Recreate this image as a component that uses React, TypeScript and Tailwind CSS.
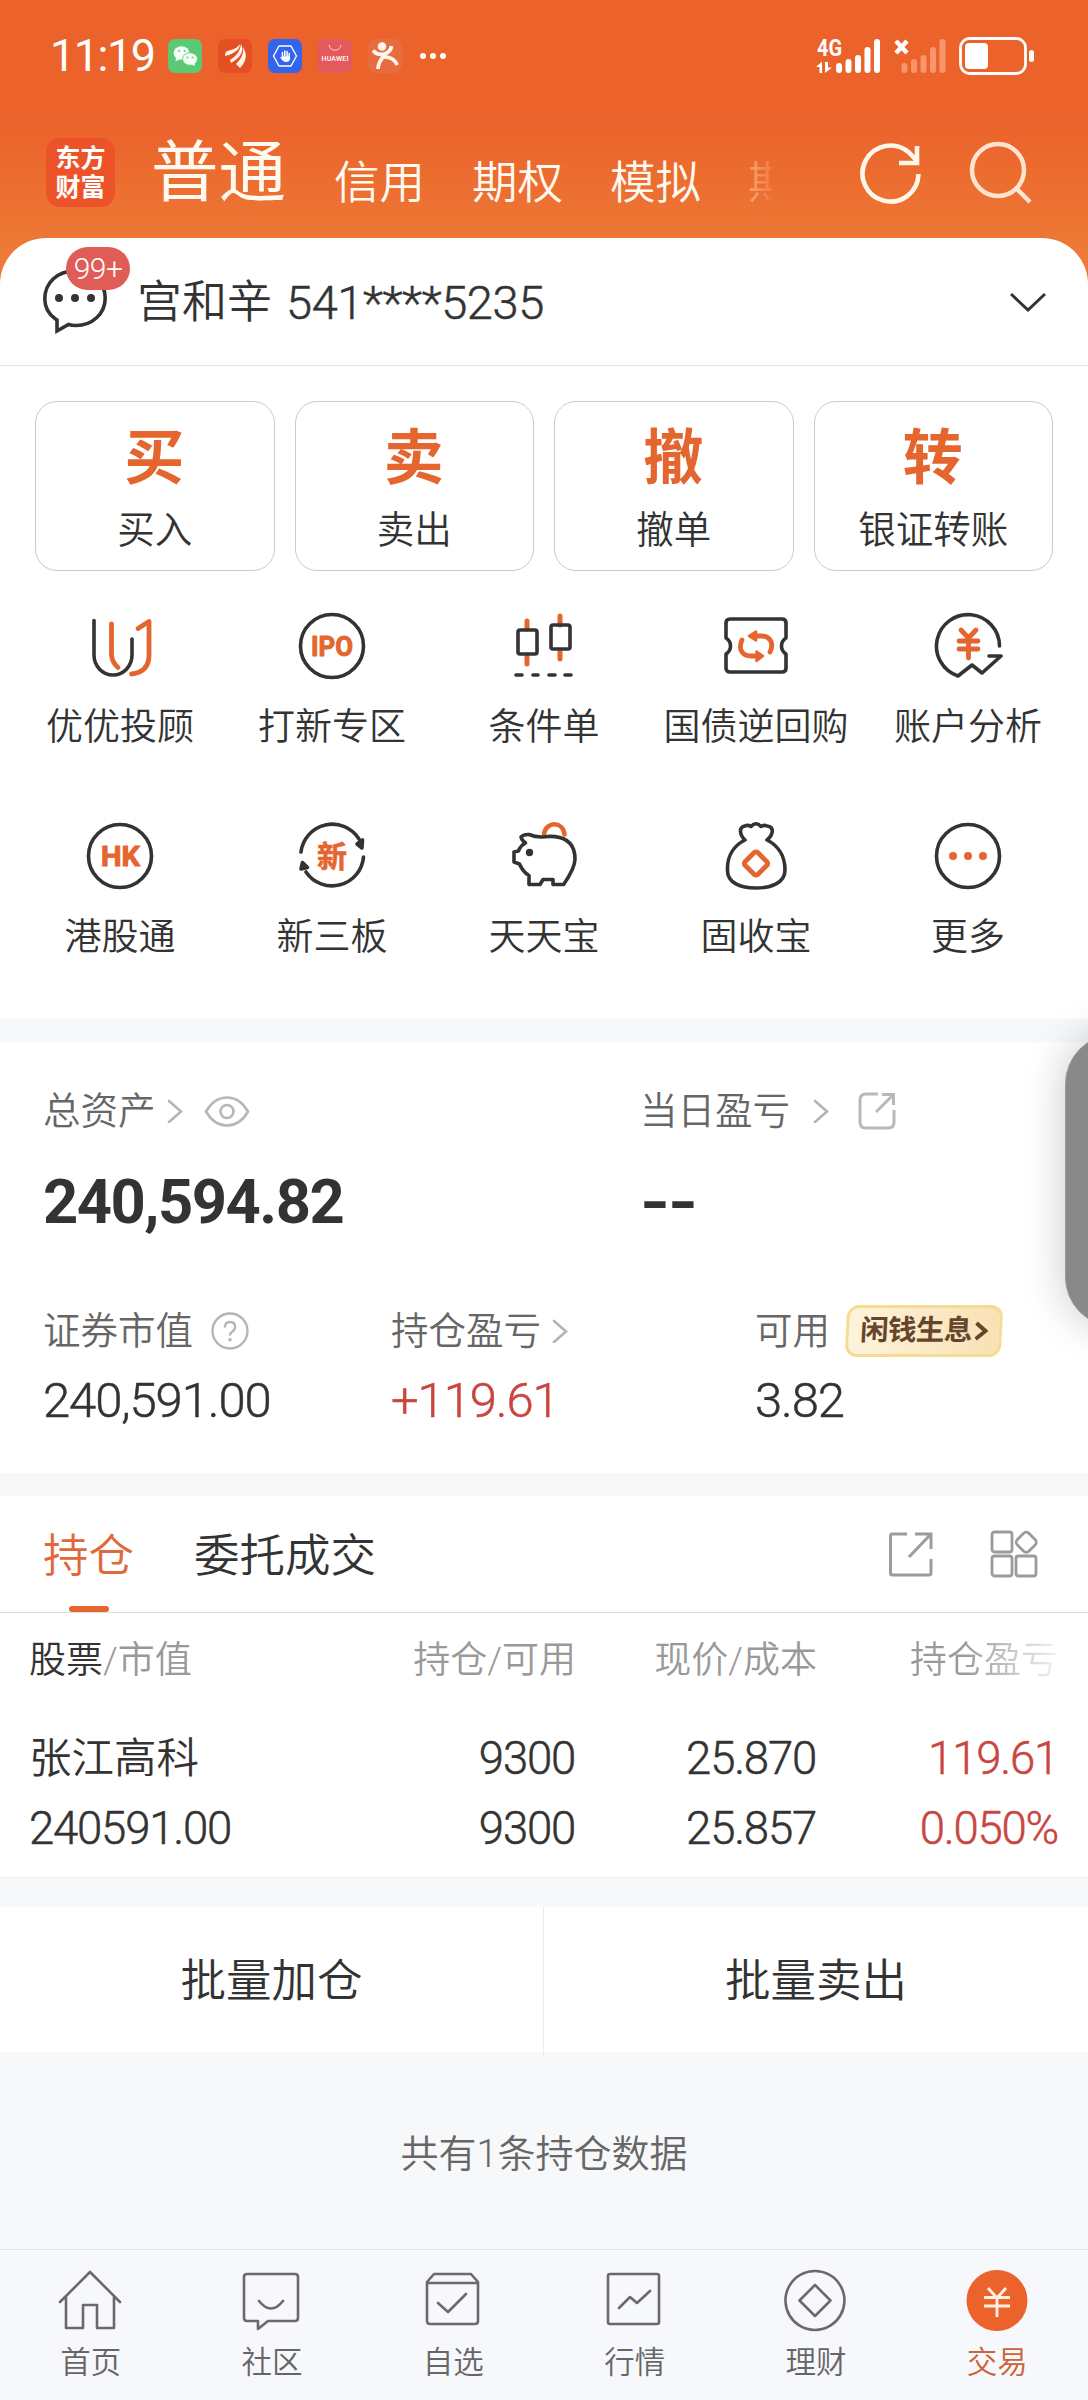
import type { ReactNode } from "react";

const INK = "#333333";
const ORANGE = "#e5652f";

function StatusBar() {
  return (
    <div className="flex h-[112px] items-center pl-[50px] pr-[54px] text-white">
      <span className="w-[118px] text-[45px] font-normal leading-[48px] tracking-[-1.5px]">11:19</span>
      <div className="flex gap-4">
        <svg className="size-[34px]" viewBox="0 0 34 34">
          <rect width="34" height="34" rx="7" fill="#5bc873" />
          <ellipse cx="13.500" cy="14" rx="8" ry="6.800" fill="#f3fff5" />
          <path d="M8 18 L7.500 22.500 L12 20 Z" fill="#f3fff5" />
          <ellipse cx="22" cy="20" rx="7.500" ry="6.300" fill="#f3fff5" stroke="#5bc873" strokeWidth="0.900" />
          <path d="M23 25 L27 27 L26.500 23 Z" fill="#f3fff5" />
          <circle cx="11" cy="12" r="1" fill="#5bc873" />
          <circle cx="16.500" cy="12" r="1" fill="#5bc873" />
          <circle cx="19.500" cy="18.500" r="0.900" fill="#5bc873" />
          <circle cx="24.500" cy="18.500" r="0.900" fill="#5bc873" />
        </svg>
        <svg className="size-[34px]" viewBox="0 0 34 34">
          <rect width="34" height="34" rx="7" fill="#e44f24" />
          <path d="M7 17 C7 12 9 12 13 11 C17 10 20 8 22 5 C22 11 15 15 7 17 Z" fill="#fff3ea" />
          <path d="M12 21 C18 17 22 13 23 5 C27 12 22 19 13 24 Z" fill="#fff3ea" />
          <path d="M18 25 C23 20 26 15 25 8 C30 16 28 23 22 29 Z" fill="#fff3ea" />
        </svg>
        <svg className="size-[34px]" viewBox="0 0 34 34">
          <rect width="34" height="34" rx="7" fill="#3265ec" />
          <path d="M11 7 H23 L28.500 17 L23 27 H11 L5.500 17 Z" fill="none" stroke="#fff" strokeWidth="1.400" strokeLinejoin="round" />
          <path d="M14.500 13.500 V19 M16.800 12 V19 M19.100 12.500 V19 M21.200 14.500 V20" stroke="#fff" strokeWidth="1.500" strokeLinecap="round" />
          <path d="M13.800 17.500 H22 V20 Q21.500 23 18 23 Q15.500 23 12 18.500 L13 18 L14 19 Z" fill="#fff" />
        </svg>
        <svg className="size-[34px]" viewBox="0 0 34 34">
          <rect width="34" height="34" rx="7" fill="#e4595b" />
          <path d="M11 6 C12 13 22 13 23 6" fill="none" stroke="#fbd3cf" strokeWidth="1" />
          <text x="17" y="21.800" textAnchor="middle" textLength="27" fontSize="7" fontWeight="500" fill="#fff">HUAWEI</text>
        </svg>
        <svg className="size-[34px]" viewBox="0 0 34 34">
          <rect width="34" height="34" rx="7" fill="#e76d40" />
          <circle cx="14" cy="7.500" r="4.300" fill="#fff6ee" />
          <path d="M5 11.500 C8 15 12 16 16 15 C20 14 23 11 23.500 7 M17 16 C13 20 10 24 10 30 M13 18 C21 17 27 20 29 26" fill="none" stroke="#fff6ee" strokeWidth="3.800" />
        </svg>
      </div>
      <div className="ml-[18px] flex gap-1">
        <i className="size-[6px] rounded-full bg-white" />
        <i className="size-[6px] rounded-full bg-white" />
        <i className="size-[6px] rounded-full bg-white" />
      </div>
      <svg className="ml-auto h-[38px] w-[218px] overflow-visible" viewBox="816 37 218 38" fill="#fff">
        <text x="817" y="56" fontSize="23" fontWeight="700" textLength="25" lengthAdjust="spacingAndGlyphs">4G</text>
        <path d="M816 67 L822 61.500 V73 H819.500 V67 Z M825 62 V73 L832 67.500 H828 V62 Z" />
        <rect x="836" y="63" width="6" height="10" rx="3" />
        <rect x="845.500" y="59" width="6" height="14" rx="3" />
        <rect x="855" y="55" width="6" height="18" rx="3" />
        <rect x="864.500" y="47" width="6" height="26" rx="3" />
        <rect x="874" y="39" width="6" height="34" rx="3" />
        <path d="M896 41 L907 53 M907 41 L896 53" stroke="#fff" strokeWidth="4.500" />
        <g fill="#f9946b">
          <rect x="901.500" y="63" width="6" height="10" rx="3" />
          <rect x="911" y="59" width="6" height="14" rx="3" />
          <rect x="920.500" y="55" width="6" height="18" rx="3" />
          <rect x="930" y="47" width="6" height="26" rx="3" />
          <rect x="939.500" y="39" width="6" height="34" rx="3" />
        </g>
        <rect x="960.500" y="38.500" width="65" height="35" rx="9" fill="none" stroke="#fff" strokeWidth="2.800" />
        <rect x="965" y="43" width="23" height="26" rx="4" />
        <rect x="1029" y="50" width="5" height="12" rx="2.500" />
      </svg>
    </div>
  );
}

function TopTabs() {
  return (
    <div className="flex h-[126px] pl-[46px] pt-[26px] text-[#fffaf0]">
      <div className="flex size-[69px] flex-col items-center justify-center rounded-[14px] bg-[#ed5329] text-[25px] font-bold leading-[29px] text-white">
        <span>东方</span>
        <span>财富</span>
      </div>
      <span className="ml-[36px] text-[67.500px] font-normal leading-[70px]">普通</span>
      <div className="flex gap-[47px] pl-[48px] pt-[20px] text-[45.500px] leading-[52px]">
        <span>信用</span>
        <span>期权</span>
        <span>模拟</span>
        <span className="bg-linear-to-r from-[#f8a473] from-0% via-[#ef7c45] via-52% to-transparent to-54% bg-clip-text text-transparent">期</span>
      </div>
      <svg className="ml-auto mr-[56px] h-[68px] w-[172px]" viewBox="860 138 172 68" fill="none" strokeWidth="4.500">
        <path d="M918.500 174 A28 28 0 1 1 909 152.500 L917 161" stroke="#fff8ea" strokeWidth="4.600" />
        <path d="M917 146 V163 H899" stroke="#fff8ea" strokeWidth="4.600" />
        <circle cx="998" cy="170" r="26" stroke="#ffe5d0" />
        <path d="M1017 189 L1030 202" stroke="#ffe5d0" />
      </svg>
    </div>
  );
}

function AccountRow() {
  return (
    <div className="flex h-[128px] items-center border-b border-[#e2e4e6] pl-[43px] pr-[42px]">
      <div className="relative mr-[30px] h-[66px] w-[64px]">
        <svg className="size-full" viewBox="0 0 64 66" fill="none">
          <path d="M12.500 50 C4 44 1.800 36 1.800 30 C1.800 14 14 2 32 2 C50 2 62.200 14 62.200 29 C62.200 45 49 56.500 33 56.500 C30 56.500 27 56 25.500 55.500 L14 62 L14 51 Z" stroke={INK} strokeWidth="3.600" />
          <circle cx="16" cy="29" r="4" fill={INK} />
          <circle cx="32" cy="29" r="4" fill={INK} />
          <circle cx="48" cy="29" r="4" fill={INK} />
        </svg>
        <span className="absolute -top-[22px] left-[23px] flex h-[43px] w-[64px] items-center justify-center rounded-full bg-[#e05c57] text-[30px] tracking-[-0.5px] text-white">99+</span>
      </div>
      <span className="mt-[3px] text-[45px] leading-[60px]">宫和辛</span>
      <span className="ml-[14px] mt-[2px] text-[47px] leading-[60px] tracking-[-0.400px] [-webkit-text-stroke:0.500px]">541****5235</span>
      <svg className="ml-auto h-[20px] w-[36px]" viewBox="0 0 36 20" fill="none">
        <path d="M1 2 L18 18 L35 2" stroke={INK} strokeWidth="3" />
      </svg>
    </div>
  );
}

const trades = [
  { big: "买", label: "买入" },
  { big: "卖", label: "卖出" },
  { big: "撤", label: "撤单" },
  { big: "转", label: "银证转账" },
];

function TradeCards() {
  return (
    <div className="grid grid-cols-4 gap-5 px-[35px] pt-[35px]">
      {trades.map((t) => (
        <div key={t.big} className="flex h-[170px] flex-col items-center rounded-[22px] border border-[#cbcbcb] pt-[25px]">
          <span className="-ml-px text-[60px] font-bold leading-[64px] text-[#e5652f]">{t.big}</span>
          <span className="mt-[13px] text-[37.5px] leading-[52px]">{t.label}</span>
        </div>
      ))}
    </div>
  );
}

function Icon({ children }: { children: ReactNode }) {
  return (
    <svg className="size-[70px]" viewBox="0 0 70 70" fill="none" stroke={INK} strokeWidth="3.600" strokeLinecap="round" strokeLinejoin="round">
      {children}
    </svg>
  );
}

const shortcuts = [
  {
    label: "优优投顾",
    icon: (
      <Icon>
        <path d="M9 9.500 V44 A19 20 0 0 0 47 44 V28" />
        <path d="M26.500 13 V43 Q26.500 51 33 56.500 M53 17.500 L64 10.500 V44 Q64 61 46.500 63" stroke={ORANGE} strokeWidth="4.800" />
      </Icon>
    ),
  },
  {
    label: "打新专区",
    icon: (
      <Icon>
        <circle cx="35" cy="35" r="31.500" />
        <text x="35" y="45" textAnchor="middle" fontSize="28" fontWeight="700" fill={ORANGE} stroke={ORANGE} strokeWidth="1" textLength="42" lengthAdjust="spacingAndGlyphs">IPO</text>
      </Icon>
    ),
  },
  {
    label: "条件单",
    icon: (
      <Icon>
        <path d="M18 10 V18 M18 46 V53 M51 5 V14 M51 41 V48" stroke={ORANGE} strokeWidth="5" />
        <rect x="9" y="19" width="19" height="24" rx="2" />
        <rect x="42" y="14" width="19" height="24" rx="2" />
        <path d="M7 64 H13 M24 64 H29 M40 64 H46 M56 64 H62" />
      </Icon>
    ),
  },
  {
    label: "国债逆回购",
    icon: (
      <Icon>
        <path d="M9 8 H61 Q65 8 65 12 V27 C59 31 59 39 65 43 V57 Q65 61 61 61 H9 Q5 61 5 57 V43 C11 39 11 31 5 27 V12 Q5 8 9 8 Z" />
        <path d="M21 29 C17 38 21 45 30 45 H37 M49 41 C53 33 50 25 40 25 H33" stroke={ORANGE} strokeWidth="4.800" />
        <path d="M28 25 L35 20.500 V29.500 Z M42 45 L35.500 40.500 V50 Z" fill={ORANGE} stroke={ORANGE} strokeWidth="2.500" />
      </Icon>
    ),
  },
  {
    label: "账户分析",
    icon: (
      <Icon>
        <path d="M66.500 35 A31.500 31.500 0 1 0 25 65 L39 54 L49 62 L68 45 H56" />
        <path d="M28 19 L35.500 27 L43 19 M26 30 H45 M26 38 H45 M35.500 28 V47" stroke={ORANGE} strokeWidth="4.800" />
      </Icon>
    ),
  },
  {
    label: "港股通",
    icon: (
      <Icon>
        <circle cx="35" cy="35" r="31.500" />
        <text x="35.500" y="45" textAnchor="middle" fontSize="28" fontWeight="700" fill={ORANGE} stroke={ORANGE} strokeWidth="1" textLength="39" lengthAdjust="spacingAndGlyphs">HK</text>
      </Icon>
    ),
  },
  {
    label: "新三板",
    icon: (
      <Icon>
        <path d="M4 31 A31.500 31.500 0 0 1 62 18 M66.500 36 A31.500 31.500 0 0 1 9 51" />
        <path d="M60 23 L65.500 19 L65 27 Z M4 48 L5.500 41.500 L10.500 46.500 Z" fill={INK} />
        <text x="35" y="46" textAnchor="middle" fontSize="30" fontWeight="700" fill={ORANGE} stroke={ORANGE} strokeWidth="0.600">新</text>
      </Icon>
    ),
  },
  {
    label: "天天宝",
    icon: (
      <Icon>
        <path d="M35 13 C37 0 54 0 55.500 13.500" stroke={ORANGE} strokeWidth="4.600" />
        <path d="M12 16 Q15 13 20 13.500 Q27 16.500 36 15.800 Q40 15 46 15.600 Q66 18 66 38 Q66 47 54.600 63.500 H44 V58.500 H34 L31 63.500 H20 V54.500 Q14 51 10.500 43 L5 41 V31 L9.500 30 Q11 25 16.500 22 Q12.500 19 12 16 Z" />
        <circle cx="20.500" cy="31.500" r="1.900" fill={INK} />
      </Icon>
    ),
  },
  {
    label: "固收宝",
    icon: (
      <Icon>
        <path d="M24 19 C18 13 18 6 24 5 Q27 3.500 30 5.500 Q35 0 40 5.500 Q43 3.500 46 5 C54 6 52 14 46 19 C56 24 64 34 64 49 C64 62 50 67 35 67 C20 67 6 62 6.500 49 C6 34 14 24 24 19 Z" />
        <rect x="26" y="33.500" width="18" height="18" rx="2.500" transform="rotate(45 35 42.500)" stroke={ORANGE} strokeWidth="4.800" />
      </Icon>
    ),
  },
  {
    label: "更多",
    icon: (
      <Icon>
        <circle cx="35" cy="35" r="31.500" />
        <g fill={ORANGE} stroke="none">
          <circle cx="20" cy="35" r="4" />
          <circle cx="35" cy="35" r="4" />
          <circle cx="50" cy="35" r="4" />
        </g>
      </Icon>
    ),
  },
];

function Shortcuts() {
  return (
    <div className="grid h-[448px] grid-cols-5 grid-rows-[210px_210px] px-[14px] pt-[40px]">
      {shortcuts.map((s) => (
        <div key={s.label} className="flex flex-col items-center whitespace-nowrap">
          {s.icon}
          <span className="mt-[21px] text-[37px] leading-[52px]">{s.label}</span>
        </div>
      ))}
    </div>
  );
}

function Arrow() {
  return (
    <svg className="h-[24px] w-[16px]" viewBox="0 0 16 24" fill="none" stroke="#b4b4b4" strokeWidth="2.600" strokeLinecap="round">
      <path d="M2 2 L14 12.500 L2 23" />
    </svg>
  );
}

function Assets() {
  return (
    <section className="h-[431px] pl-[43px] pt-[42px]">
      <div className="flex h-[54px] items-center text-[37.5px] text-[#666]">
        <div className="flex w-[597px] items-center">
          <span>总资产</span>
          <span className="ml-[11px]"><Arrow /></span>
          <svg className="ml-[21px] h-[31px] w-[46px]" viewBox="0 0 46 31" fill="none" stroke="#b7b7b7" strokeWidth="2.600">
            <path d="M2 15.500 Q10 1.500 23 1.500 Q36 1.500 44 15.500 Q36 29.500 23 29.500 Q10 29.500 2 15.500 Z" />
            <circle cx="23" cy="15.500" r="6.500" />
          </svg>
        </div>
        <span>当日盈亏</span>
        <span className="ml-[23px]"><Arrow /></span>
        <svg className="ml-[29px] size-[38px]" viewBox="0 0 38 38" fill="none" stroke="#b9b9b9" strokeWidth="3">
          <path d="M20 2 H8 Q2 2 2 8 V30 Q2 36 8 36 H30 Q36 36 36 30 V18 M24 2.500 H35.500 V13 M35 3 L18 20" />
        </svg>
      </div>
      <div className="mt-[29px] flex h-[70px] items-center text-[61.500px] font-bold leading-[70px]">
        <span className="w-[597px] tracking-[-1.500px]">240,594.82</span>
        <span className="flex gap-[4px]">
          <span className="w-[24px] origin-left scale-x-[1.250] leading-[60px]">-</span>
          <span className="w-[24px] origin-left scale-x-[1.250] leading-[60px]">-</span>
        </span>
      </div>
      <div className="mt-[67px] flex h-[54px] items-center text-[37.5px] text-[#666]">
        <div className="flex w-[348px] items-center">
          <span>证券市值</span>
          <svg className="ml-[18px] size-[38px]" viewBox="0 0 38 38" fill="none" stroke="#b4b4b4" strokeWidth="2.300">
            <circle cx="19" cy="19" r="17.500" />
            <path d="M13.800 15.500 Q14 10 19 10 Q24.200 10 24.200 15 Q24.200 17.500 21.500 19.500 Q19 21 19 23.500" />
            <circle cx="19" cy="27.800" r="1.200" fill="#b4b4b4" strokeWidth="1.200" />
          </svg>
        </div>
        <div className="flex w-[364px] items-center">
          <span>持仓盈亏</span>
          <span className="ml-[11px]"><Arrow /></span>
        </div>
        <span>可用</span>
        <span className="ml-[16px] flex h-[52px] w-[156px] -skew-x-3 items-center justify-center rounded-[12px] border-[3px] border-[#f4dd92] bg-linear-to-r from-[#fdf3dc] to-[#f9e1b4] text-[28.500px] font-bold tracking-[-0.6px] text-[#65462b]">
          闲钱生息
          <svg className="ml-[3px] h-[20px] w-[13px]" viewBox="0 0 13 20" fill="none" stroke="#65462b" strokeWidth="4">
            <path d="M1 2 L10.500 10 L1 18" />
          </svg>
        </span>
      </div>
      <div className="mt-[13px] flex h-[60px] items-center text-[49px] tracking-[-1.100px] [-webkit-text-stroke:0.500px]">
        <span className="w-[348px]">240,591.00</span>
        <span className="w-[364px] text-[#c9453f]">+119.61</span>
        <span>3.82</span>
      </div>
    </section>
  );
}

function PositionTabs() {
  return (
    <div className="flex h-[117px] items-center border-b border-[#dcdcdc] pl-[43px] pr-[50px] text-[45.500px]">
      <div className="relative flex h-full items-center pt-[6px] text-[#e0683a]">
        持仓
        <i className="absolute bottom-0 left-[26px] h-[6px] w-[40px] rounded-full bg-[#e5652f]" />
      </div>
      <span className="ml-[60px] pt-[6px]">委托成交</span>
      <svg className="ml-auto size-[46px]" viewBox="0 0 46 46" fill="none" stroke="#9b9b9b" strokeWidth="3">
        <path d="M19 3 H4 Q2.500 3 2.500 5 V42 Q2.500 44 4.500 44 H41 Q43 44 43 42 V28 M27 3 H43 V18 M42 4 L21 26" />
      </svg>
      <svg className="ml-[56px] size-[48px]" viewBox="0 0 48 48" fill="none" stroke="#9b9b9b" strokeWidth="2.800">
        <rect x="2" y="2" width="20" height="20" rx="2.500" />
        <rect x="2" y="26" width="20" height="20" rx="2.500" />
        <rect x="26" y="26" width="20" height="20" rx="2.500" />
        <rect x="28" y="4" width="16.500" height="16.500" rx="4" transform="rotate(45 36.250 12.250)" />
      </svg>
    </div>
  );
}

function Positions() {
  return (
    <section className="h-[265px] border-b border-[#eeeff1] pl-[29px] pr-[30px] pt-[20px]">
      <div className="grid h-[54px] grid-cols-[300px_247px_241px_1fr] items-center text-right text-[37px] text-[#999]">
        <span className="text-left"><span className="text-[#333]">股票</span>/市值</span>
        <span>持仓/可用</span>
        <span>现价/成本</span>
        <span className="bg-linear-to-r from-[#999] from-60% to-[#f3f3f3] bg-clip-text text-transparent">持仓盈亏</span>
      </div>
      <div className="mt-[37px] grid grid-cols-[300px_246px_241px_1fr] grid-rows-[70px_70px] items-center text-right text-[45.500px] tracking-[-1.200px] [-webkit-text-stroke:0.500px]">
        <span className="text-left text-[42.500px] tracking-normal [-webkit-text-stroke:0px]">张江高科</span>
        <span>9300</span>
        <span>25.870</span>
        <span className="text-[#c9453f]">119.61</span>
        <span className="text-left">240591.00</span>
        <span>9300</span>
        <span>25.857</span>
        <span className="text-[#c9453f]">0.050%</span>
      </div>
    </section>
  );
}

const tabs = [
  { label: "首页", icon: <path d="M2 33 L32 3 L62 33 M8 28 V59 H25 V36 H39 V59 H56 V28" /> },
  { label: "社区", icon: <path d="M8 5 H56 Q59 5 59 8 V49 Q59 52 56 52 H29 L19 60 V52 H8 Q5 52 5 49 V8 Q5 5 8 5 Z M20 32 Q32 47 44 32" /> },
  { label: "自选", icon: <path d="M6 13 L13 5 H50 L57 13 V52 Q57 55 54 55 H9 Q6 55 6 52 Z M6 14 H57 M17 34 L27 43 L45 25" /> },
  { label: "行情", icon: <path d="M8 5 H55 Q57 5 57 7 V53 Q57 55 55 55 H8 Q6 55 6 53 V7 Q6 5 8 5 Z M17 39 L28 28 L35 34 L48 22" /> },
  { label: "理财", icon: <path d="M32 2 A29.500 29.500 0 1 1 31.900 2 Z M32 16 L47.500 31.500 L32 47 L16.500 31.500 Z" /> },
];

function TabBar() {
  return (
    <nav className="grid h-[151px] grid-cols-6 border-t border-[#e0e3e5] bg-[#f7f8fb] pt-[19px] text-[30.500px] text-[#666]">
      {tabs.map((t) => (
        <div key={t.label} className="flex flex-col items-center">
          <svg className="-ml-px h-[64px] w-[64px]" viewBox="0 0 64 64" fill="none" stroke="#6a6a6a" strokeWidth="2.600" strokeLinejoin="round" strokeLinecap="round">
            {t.icon}
          </svg>
          <span className="mt-[8px] leading-[44px]">{t.label}</span>
        </div>
      ))}
      <div className="flex flex-col items-center text-[#c9643b]">
        <svg className="h-[64px] w-[64px]" viewBox="0 0 64 64" fill="none" stroke="#fff0e0" strokeWidth="2.900">
          <circle cx="32" cy="31.500" r="30.500" fill="#eb622b" stroke="none" />
          <path d="M23 19 L32 29 L41 19 M19 28.500 H45 M19 37 H45 M32 29 V48" />
        </svg>
        <span className="mt-[8px] leading-[44px]">交易</span>
      </div>
    </nav>
  );
}

export default function App() {
  return (
    <div className="relative flex h-[2400px] w-[1088px] flex-col overflow-hidden bg-[#f7f8fa] font-['Roboto','Noto_Sans_CJK_SC',sans-serif] font-[350] text-[#333]" lang="zh-CN">
      <header className="-mb-[50px] h-[288px] shrink-0 bg-linear-to-b from-[#eb622b] from-42% to-[#ed7a36] to-88%">
        <StatusBar />
        <TopTabs />
      </header>
      <main className="flex flex-col">
        <div className="rounded-t-[46px] bg-white">
          <AccountRow />
          <TradeCards />
          <Shortcuts />
        </div>
        <div className="mt-[23px] bg-white">
          <Assets />
        </div>
        <div className="mt-[23px] bg-white">
          <PositionTabs />
          <Positions />
        </div>
        <div className="mt-[29px] grid h-[145px] grid-cols-2 bg-white text-center text-[45.500px] leading-[150px]">
          <span className="border-r border-[#ececee]">批量加仓</span>
          <span>批量卖出</span>
        </div>
        <p className="mt-[76px] text-center text-[38px] leading-[52px] text-[#666]">共有1条持仓数据</p>
      </main>
      <div className="mt-auto">
        <TabBar />
      </div>
      <div className="absolute left-[1065px] top-[1034px] h-[293px] w-[100px] rounded-[50px] border border-[#9b9b9b] bg-[#898989] shadow-[0_0_42px_rgba(0,0,0,0.220)]" />
    </div>
  );
}
